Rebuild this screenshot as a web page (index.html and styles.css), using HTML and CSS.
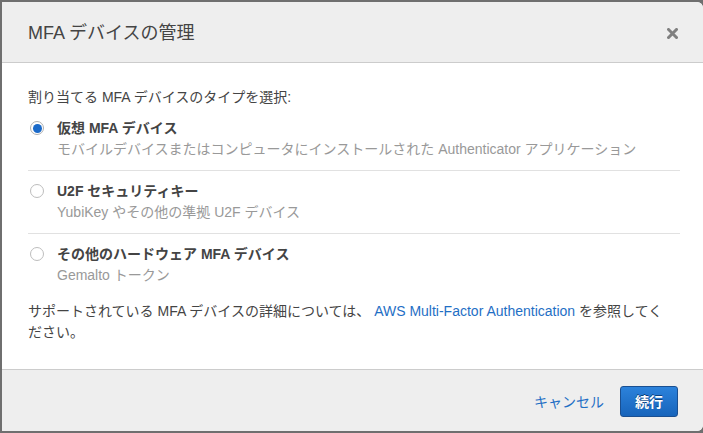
FILE: index.html
```html
<!DOCTYPE html>
<html lang="ja">
<head>
<meta charset="utf-8">
<title>MFA デバイスの管理</title>
<link rel="stylesheet" href="styles.css">
</head>
<body>
<div class="modal">
  <div class="modal-header">
    <h1 class="modal-title">MFA デバイスの管理</h1>
    <button class="close" aria-label="閉じる">
      <svg width="11" height="11" viewBox="0 0 11 11"><path d="M1.5 1.5 L9.5 9.5 M9.5 1.5 L1.5 9.5" stroke="#808080" stroke-width="3" stroke-linecap="square"/></svg>
    </button>
  </div>
  <div class="modal-body">
    <p class="intro">割り当てる MFA デバイスのタイプを選択:</p>
    <div class="options">
      <label class="option">
        <span class="radio checked"></span>
        <span class="option-text">
          <span class="option-title">仮想 MFA デバイス</span>
          <span class="option-desc">モバイルデバイスまたはコンピュータにインストールされた Authenticator アプリケーション</span>
        </span>
      </label>
      <label class="option">
        <span class="radio"></span>
        <span class="option-text">
          <span class="option-title">U2F セキュリティキー</span>
          <span class="option-desc">YubiKey やその他の準拠 U2F デバイス</span>
        </span>
      </label>
      <label class="option">
        <span class="radio"></span>
        <span class="option-text">
          <span class="option-title">その他のハードウェア MFA デバイス</span>
          <span class="option-desc">Gemalto トークン</span>
        </span>
      </label>
    </div>
    <p class="note">サポートされている MFA デバイスの詳細については、 <a href="#" class="link">AWS Multi-Factor Authentication</a> を参照してください。</p>
  </div>
  <div class="modal-footer">
    <a href="#" class="cancel">キャンセル</a>
    <button class="primary">続行</button>
  </div>
</div>
</body>
</html>
```
FILE: styles.css
```css
html, body {
  margin: 0;
  height: 100%;
}
body {
  background: #6f6f6f;
  padding: 2px 0 0 2px;
  box-sizing: border-box;
  overflow: hidden;
  font-family: "Liberation Sans", "Noto Sans CJK JP", sans-serif;
  font-size: 14px;
  color: #444;
}
.modal {
  width: 701px;
  height: 429px;
  background: #fff;
  border-radius: 0 6px 6px 0;
  display: flex;
  flex-direction: column;
  overflow: hidden;
}
.modal-header {
  height: 60px;
  flex: none;
  background: #eeeeee;
  border-bottom: 1px solid #cccccc;
  display: flex;
  align-items: center;
  justify-content: space-between;
  padding: 0 25px 0 26px;
}
.modal-title {
  margin: 0;
  font-size: 18px;
  font-weight: normal;
  color: #444;
  line-height: 24px;
  padding-top: 2px;
}
.close {
  background: none;
  border: 0;
  padding: 0;
  width: 11px;
  height: 11px;
  display: flex;
  margin-top: 2px;
}
.modal-body {
  flex: 1;
  padding: 24px 23px 0 26px;
  line-height: 21px;
}
.intro {
  margin: 0;
}
.options {
  display: flex;
  flex-direction: column;
}
.option {
  display: flex;
  align-items: flex-start;
  gap: 13px;
  padding: 10px 0 10px 0;
  border-bottom: 1px solid #e1e1e1;
}
.option:last-child {
  border-bottom: 0;
}
.radio {
  flex: none;
  width: 14px;
  height: 14px;
  box-sizing: border-box;
  border: 1px solid #bdbdbd;
  border-radius: 50%;
  margin: 3px 0 0 2px;
  background: #fff;
  position: relative;
}
.radio.checked {
  border-color: #b0b0b0;
}
.radio.checked::after {
  content: "";
  position: absolute;
  left: 1.5px;
  top: 1.5px;
  width: 9px;
  height: 9px;
  border-radius: 50%;
  background: #1b6ac9;
}
.option-text {
  display: flex;
  flex-direction: column;
}
.option-title {
  font-weight: bold;
  color: #444;
}
.option-desc {
  color: #999;
}
.note {
  margin: 5px 0 0 0;
  width: 642px;
}
.link {
  color: #1f6fc5;
  text-decoration: none;
}
.modal-footer {
  height: 61px;
  flex: none;
  background: #eeeeee;
  border-top: 1px solid #cccccc;
  display: flex;
  align-items: center;
  justify-content: flex-end;
  gap: 16px;
  padding: 0 25px 0 26px;
}
.cancel {
  color: #1f6fc5;
  text-decoration: none;
  font-weight: normal;
}
.primary {
  width: 58px;
  height: 31px;
  border: 1px solid #1a4f91;
  border-radius: 3px;
  background: linear-gradient(#2c82db, #1764bb);
  color: #fff;
  font-family: "Liberation Sans", "Noto Sans CJK JP", sans-serif;
  font-size: 14px;
  font-weight: bold;
  text-shadow: 0 -1px 0 #0c3f7a;
  padding: 0;
  margin-top: 1px;
}
```
